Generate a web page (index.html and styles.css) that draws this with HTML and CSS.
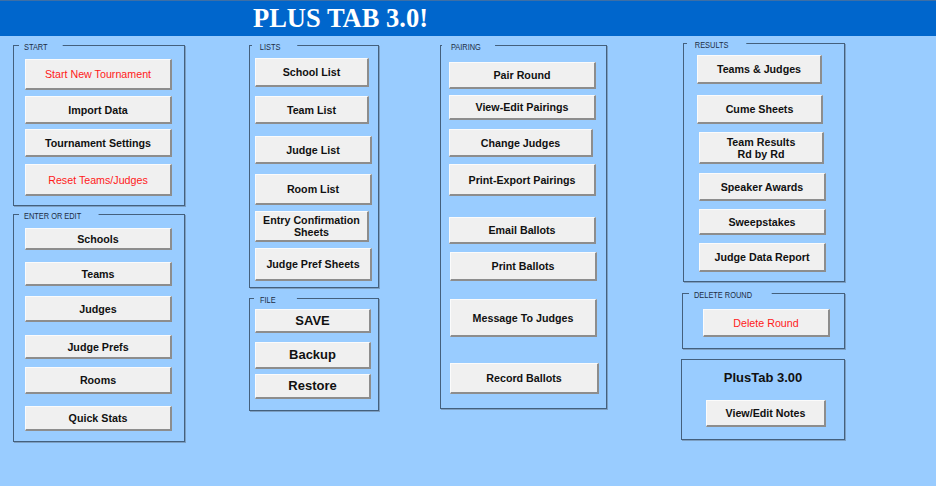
FILE: index.html
```html
<!DOCTYPE html>
<html lang="en">
<head>
<meta charset="utf-8">
<title>PLUS TAB 3.0!</title>
<link rel="stylesheet" href="styles.css">
</head>
<body>
<header class="topbar">
  <h1 class="title">PLUS TAB 3.0!</h1>
</header>
<main class="board">
  <div class="col col-1">
    <section class="group g-start">
      <span class="legend">START</span>
      <button class="btn red b-start">Start New Tournament</button>
      <button class="btn b-import">Import Data</button>
      <button class="btn b-settings">Tournament Settings</button>
      <button class="btn red b-reset">Reset Teams/Judges</button>
    </section>
    <section class="group g-enter">
      <span class="legend">ENTER OR EDIT</span>
      <button class="btn b-schools">Schools</button>
      <button class="btn b-teams">Teams</button>
      <button class="btn b-judges">Judges</button>
      <button class="btn b-prefs">Judge Prefs</button>
      <button class="btn b-rooms">Rooms</button>
      <button class="btn b-stats">Quick Stats</button>
    </section>
  </div>

  <div class="col col-2">
    <section class="group g-lists">
      <span class="legend">LISTS</span>
      <button class="btn b-schoollist">School List</button>
      <button class="btn b-teamlist">Team List</button>
      <button class="btn b-judgelist">Judge List</button>
      <button class="btn b-roomlist">Room List</button>
      <button class="btn b-entry">Entry Confirmation<br>Sheets</button>
      <button class="btn b-prefsheets">Judge Pref Sheets</button>
    </section>
    <section class="group g-file">
      <span class="legend">FILE</span>
      <button class="btn big b-save">SAVE</button>
      <button class="btn big b-backup">Backup</button>
      <button class="btn big b-restore">Restore</button>
    </section>
  </div>

  <div class="col col-3">
    <section class="group g-pairing">
      <span class="legend">PAIRING</span>
      <button class="btn b-pair">Pair Round</button>
      <button class="btn b-view">View-Edit Pairings</button>
      <button class="btn b-change">Change Judges</button>
      <button class="btn b-export">Print-Export Pairings</button>
      <button class="btn b-email">Email Ballots</button>
      <button class="btn b-print">Print Ballots</button>
      <button class="btn b-message">Message To Judges</button>
      <button class="btn b-record">Record Ballots</button>
    </section>
  </div>

  <div class="col col-4">
    <section class="group g-results">
      <span class="legend">RESULTS</span>
      <button class="btn b-tj">Teams &amp; Judges</button>
      <button class="btn b-cume">Cume Sheets</button>
      <button class="btn b-rdbyrd">Team Results<br>Rd by Rd</button>
      <button class="btn b-speaker">Speaker Awards</button>
      <button class="btn b-sweep">Sweepstakes</button>
      <button class="btn b-jdr">Judge Data Report</button>
    </section>
    <section class="group g-delete">
      <span class="legend">DELETE ROUND</span>
      <button class="btn red b-delete">Delete Round</button>
    </section>
    <section class="group g-about">
      <div class="version">PlusTab 3.00</div>
      <button class="btn b-notes">View/Edit Notes</button>
    </section>
  </div>
</main>
</body>
</html>
```

FILE: styles.css
```css
* { box-sizing: border-box; }

html, body {
  margin: 0;
  padding: 0;
}

body {
  background: #99ccff;
  width: 936px;
  height: 486px;
  overflow: hidden;
  font-family: "Liberation Sans", Arial, sans-serif;
}

/* ---------- header ---------- */
.topbar {
  height: 36px;
  background: #0066cc;
  border-top: 1px solid #3d6fa6;
}

.title {
  margin: 0;
  padding-left: 253px;
  font-family: "Liberation Serif", "Times New Roman", serif;
  font-weight: bold;
  font-size: 26.5px;
  line-height: 34px;
  color: #ffffff;
}

/* ---------- columns ---------- */
.board {
  display: flex;
  align-items: flex-start;
}

.col {
  display: flex;
  flex-direction: column;
  align-items: flex-start;
}

.col-1 { margin-left: 13px; margin-top: 9px; }
.col-2 { margin-left: 64px; margin-top: 9px; }
.col-3 { margin-left: 61px; margin-top: 9px; }
.col-4 { margin-left: 76px; margin-top: 7px; }

/* ---------- group boxes ---------- */
.group {
  position: relative;
  display: flex;
  flex-direction: column;
  align-items: flex-start;
  border: 1px solid #44607d;
  box-shadow: 1px 1px 0 #7d9fc2;
}

.legend {
  position: absolute;
  top: -4px;
  left: 5px;
  padding: 0 19px 0 6.4px;
  background: #99ccff;
  font-family: "Liberation Sans", Arial, sans-serif;
  font-size: 9.5px;
  line-height: 10px;
  color: #1d2d44;
  white-space: nowrap;
  transform: scaleX(0.78);
  transform-origin: 0 0;
}

.g-start   { width: 172px; height: 161px; }
.g-enter   { width: 172px; height: 228px; margin-top: 8px; }
.g-lists   { width: 130px; height: 243px; }
.g-file    { width: 130px; height: 113px; margin-top: 10px; }
.g-pairing { width: 167px; height: 364px; }
.g-results { width: 162px; height: 239px; }
.g-delete  { width: 163px; height: 56px; margin-top: 11px; margin-left: -1px; }
.g-about   { width: 164px; height: 81px; margin-top: 10px; margin-left: -2px; }

.g-enter .legend   { left: 5px; padding: 0 22px 0 6.4px; }
.g-lists .legend   { left: 2px; padding: 0 22px 0 10px; }
.g-file .legend    { left: 4px; padding: 0 27px 0 7.7px; }
.g-pairing .legend { left: 1px; padding: 0 18px 0 11.5px; }
.g-results .legend { left: 3px; padding: 0 23px 0 10px; }
.g-delete .legend  { left: 6px; padding: 0 25.6px 0 6.4px; }

/* ---------- buttons ---------- */
.btn {
  display: flex;
  align-items: center;
  justify-content: center;
  flex: none;
  margin: 0;
  padding: 0;
  background: #f0f0f0;
  border-top: 1px solid #fbfbfb;
  border-left: 1px solid #fbfbfb;
  border-right: 2px solid #8d8d8d;
  border-bottom: 2px solid #8d8d8d;
  border-radius: 0;
  font-family: "Liberation Sans", Arial, sans-serif;
  font-weight: bold;
  font-size: 10.7px;
  line-height: 12px;
  color: #111111;
  text-align: center;
  cursor: default;
}

.btn.red {
  font-weight: normal;
  color: #ff1a1a;
}

.btn.big {
  font-size: 13px;
}

/* START */
.b-start    { margin: 13px 0 0 11px; width: 147px; height: 31px; }
.b-import   { margin: 6px 0 0 11px;  width: 147px; height: 28px; }
.b-settings { margin: 5px 0 0 11px;  width: 147px; height: 28px; }
.b-reset    { margin: 7px 0 0 11px;  width: 147px; height: 32px; }

/* ENTER OR EDIT */
.b-schools { margin: 13px 0 0 11px; width: 147px; height: 22px; }
.b-teams   { margin: 12px 0 0 11px; width: 147px; height: 24px; }
.b-judges  { margin: 10px 0 0 11px; width: 147px; height: 26px; }
.b-prefs   { margin: 13px 0 0 11px; width: 147px; height: 24px; }
.b-rooms   { margin: 8px 0 0 11px;  width: 147px; height: 27px; }
.b-stats   { margin: 12px 0 0 11px; width: 147px; height: 25px; }

/* LISTS */
.b-schoollist { margin: 12px 0 0 5px; width: 114px; height: 29px; }
.b-teamlist   { margin: 9px 0 0 5px;  width: 114px; height: 28px; }
.b-judgelist  { margin: 12px 0 0 5px; width: 117px; height: 28px; }
.b-roomlist   { margin: 10px 0 0 5px; width: 117px; height: 31px; }
.b-entry      { margin: 6px 0 0 5px;  width: 114px; height: 31px; }
.b-prefsheets { margin: 6px 0 0 5px;  width: 117px; height: 33px; }

/* FILE */
.b-save    { margin: 10px 0 0 5px; width: 116px; height: 24px; }
.b-backup  { margin: 9px 0 0 5px;  width: 116px; height: 27px; }
.b-restore { margin: 5px 0 0 5px;  width: 116px; height: 25px; }

/* PAIRING */
.b-pair    { margin: 16px 0 0 8px; width: 147px; height: 27px; }
.b-view    { margin: 6px 0 0 8px;  width: 147px; height: 25px; }
.b-change  { margin: 9px 0 0 8px;  width: 144px; height: 28px; }
.b-export  { margin: 7px 0 0 8px;  width: 147px; height: 32px; }
.b-email   { margin: 21px 0 0 8px; width: 147px; height: 27px; }
.b-print   { margin: 8px 0 0 9px;  width: 147px; height: 29px; }
.b-message { margin: 18px 0 0 9px; width: 147px; height: 38px; }
.b-record  { margin: 26px 0 0 9px; width: 149px; height: 31px; }

/* RESULTS */
.b-tj      { margin: 11px 0 0 13px; width: 125px; height: 29px; }
.b-cume    { margin: 11px 0 0 13px; width: 126px; height: 29px; }
.b-rdbyrd  { margin: 8px 0 0 15px;  width: 125px; height: 32px; }
.b-speaker { margin: 9px 0 0 15px;  width: 127px; height: 28px; }
.b-sweep   { margin: 8px 0 0 15px;  width: 127px; height: 26px; }
.b-jdr     { margin: 8px 0 0 15px;  width: 127px; height: 29px; }

/* DELETE ROUND */
.b-delete  { margin: 15px 0 0 20px; width: 127px; height: 28px; }

/* ABOUT */
.version {
  align-self: stretch;
  margin-top: 10px;
  font-weight: bold;
  font-size: 13px;
  line-height: 16px;
  color: #111111;
  text-align: center;
}

.b-notes { margin: 14px 0 0 24px; width: 120px; height: 27px; }
```
